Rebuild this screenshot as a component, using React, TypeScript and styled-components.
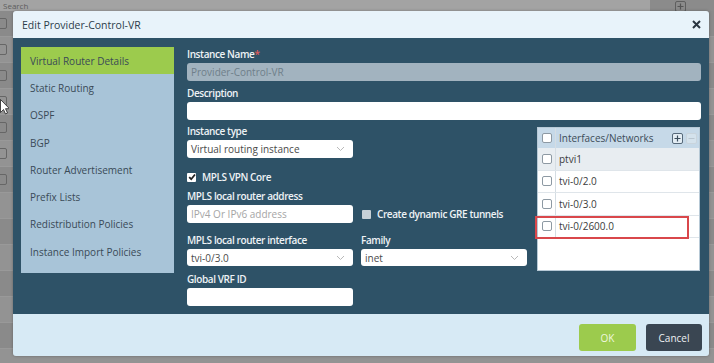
import React from 'react';
import styled, { createGlobalStyle } from 'styled-components';

const GlobalStyle = createGlobalStyle`
  html, body { margin: 0; padding: 0; }
  body {
    font-family: 'Open Sans', 'Liberation Sans', sans-serif;
    background: #8b8b8b;
  }
`;

const Page = styled.div`
  position: relative;
  width: 714px;
  height: 363px;
  overflow: hidden;
  background: #8b8b8b;
`;

const TopBar = styled.div`
  height: 11px;
  display: flex;
  align-items: flex-start;
  gap: 8px;
`;

const SearchBox = styled.div`
  width: 650px;
  height: 11px;
  box-sizing: border-box;
  padding-left: 3px;
  background: #a3a3a3;
  font-size: 8px;
  line-height: 11px;
  color: #5d5d5d;
`;

const TinyBtn = styled.div`
  width: 9px;
  height: 9px;
  margin: 1px 0 0 17px;
  display: flex;
  align-items: center;
  justify-content: center;
  border: 1px solid #5f5f5f;
  border-radius: 2px;
`;

const BgRow = styled.div<{ $shade: boolean }>`
  height: 25px;
  display: flex;
  align-items: center;
  background: ${p => (p.$shade ? '#939393' : '#8a8a8a')};
  border-bottom: 1px solid #999;
`;

const BgCheck = styled.div`
  width: 8px;
  height: 9px;
  margin-left: -3px;
  border: 1px solid #666;
  border-radius: 2px;
`;

const Pointer = styled.svg`
  position: absolute;
  left: 0;
  top: 99px;
`;

const Modal = styled.div`
  position: absolute;
  left: 13px;
  top: 11px;
  width: 696px;
  height: 345px;
  display: flex;
  flex-direction: column;
  border-radius: 3px;
  overflow: hidden;
  box-shadow: 0 0 3px rgba(0, 0, 0, 0.3);
`;

const Header = styled.div`
  height: 27px;
  flex: none;
  display: flex;
  align-items: center;
  justify-content: space-between;
  padding: 0 8px 0 9px;
  background: #e8f3fa;
  font-size: 10.5px;
  color: #2c3d4a;
`;

const Body = styled.div`
  flex: 1;
  display: flex;
  gap: 13px;
  padding: 9px 8px 0 8px;
  background: #2e5267;
`;

const Nav = styled.ul`
  width: 153px;
  height: 226px;
  flex: none;
  margin: 0;
  padding: 0;
  list-style: none;
  background: #a8c4d8;
`;

const NavItem = styled.li<{ $active?: boolean }>`
  height: 27.3px;
  display: flex;
  align-items: center;
  padding-left: 9px;
  font-size: 10px;
  color: #3a4a57;
  background: ${p => (p.$active ? '#9ccb4d' : 'transparent')};
`;

const Form = styled.div`
  flex: 1;
  display: flex;
  flex-direction: column;
`;

const Label = styled.div<{ $top?: number }>`
  height: 15px;
  margin-top: ${p => p.$top ?? 0}px;
  margin-bottom: 1px;
  font-size: 10px;
  font-weight: 600;
  letter-spacing: -0.4px;
  line-height: 15px;
  color: #eef3f6;
  white-space: nowrap;
`;

const Req = styled.span`
  color: #e05a5a;
`;

const Input = styled.div<{ $w?: number; $disabled?: boolean; $h?: number }>`
  width: ${p => (p.$w ? p.$w + 'px' : '100%')};
  height: ${p => p.$h ?? 18}px;
  box-sizing: border-box;
  display: flex;
  align-items: center;
  justify-content: space-between;
  padding: 0 8px 0 4px;
  border-radius: 3px;
  background: ${p => (p.$disabled ? '#a2b3bf' : '#ffffff')};
  font-size: 10px;
  color: ${p => (p.$disabled ? '#6f7f8a' : '#4a4a4a')};
  white-space: nowrap;
`;

const Placeholder = styled.span`
  color: #a5a5a5;
`;

const Lower = styled.div`
  display: flex;
  gap: 10px;
`;

const LeftCol = styled.div`
  width: 340px;
  display: flex;
  flex-direction: column;
`;

const Row = styled.div<{ $gap?: number }>`
  display: flex;
  align-items: center;
  gap: ${p => p.$gap ?? 8}px;
`;

const Col = styled.div`
  display: flex;
  flex-direction: column;
`;

const CheckRow = styled.label<{ $top?: number }>`
  display: flex;
  align-items: center;
  gap: 6px;
  height: 14px;
  margin-top: ${p => p.$top ?? 0}px;
  font-size: 10px;
  font-weight: 600;
  letter-spacing: -0.4px;
  color: #eef3f6;
  white-space: nowrap;
`;

const Box = styled.span<{ $fill: string }>`
  width: 9px;
  height: 9px;
  flex: none;
  display: flex;
  align-items: center;
  justify-content: center;
  border-radius: 1px;
  background: ${p => p.$fill};
`;

const Grid = styled.div`
  width: 163px;
  height: 144px;
  margin-top: 7px;
  display: flex;
  flex-direction: column;
  background: #ffffff;
  border: 1px solid #b7c9d6;
  box-sizing: border-box;
`;

const GridHead = styled.div`
  height: 20px;
  flex: none;
  display: flex;
  align-items: center;
  background: #c6d9e8;
  font-size: 10px;
  color: #3d4c58;
`;

const GridRow = styled.div<{ $tint?: boolean; $marked?: boolean }>`
  position: relative;
  height: 22.5px;
  flex: none;
  display: flex;
  align-items: center;
  border-bottom: 1px solid #dfe5ea;
  box-sizing: border-box;
  background: ${p => (p.$tint ? '#e8edf1' : '#ffffff')};
  font-size: 10px;
  color: #3b3b3b;

  ${p =>
    p.$marked &&
    `&::after {
      content: '';
      position: absolute;
      left: -3px;
      top: 0;
      width: 154px;
      height: 23px;
      box-sizing: border-box;
      border: 2px solid #d9474b;
    }`}
`;

const CheckCell = styled.div`
  width: 17px;
  height: 100%;
  flex: none;
  display: flex;
  align-items: center;
  justify-content: center;
  border-right: 1px solid #d5dde3;
  margin-right: 3px;
`;

const GridBox = styled.span`
  width: 8px;
  height: 8px;
  border: 1px solid #8d99a3;
  border-radius: 2px;
  background: #fff;
`;

const HeadTools = styled.div`
  margin-left: auto;
  display: flex;
  gap: 3px;
  padding-right: 2px;
`;

const ToolBtn = styled.span<{ $dim?: boolean }>`
  width: 9px;
  height: 9px;
  display: flex;
  align-items: center;
  justify-content: center;
  border: 1px solid ${p => (p.$dim ? '#c9d4dc' : '#56697a')};
  border-radius: 2px;
  background: ${p => (p.$dim ? '#d4e2ec' : '#e3edf4')};
`;

const Footer = styled.div`
  height: 42px;
  flex: none;
  display: flex;
  justify-content: flex-end;
  align-items: flex-start;
  gap: 10px;
  padding: 10px 7px 0 0;
  box-sizing: border-box;
  background: #d7eaf5;
`;

const Button = styled.button<{ $primary?: boolean }>`
  width: ${p => (p.$primary ? 57 : 56)}px;
  height: 27px;
  border: none;
  border-radius: 3px;
  font-family: inherit;
  font-size: 10px;
  color: ${p => (p.$primary ? '#eef7df' : '#eef1f3')};
  background: ${p => (p.$primary ? '#9ccb4d' : '#3a4652')};
`;

const Chevron = () => (
  <svg width="9" height="6" viewBox="0 0 9 6">
    <path d="M1 1l3.5 3.5L8 1" fill="none" stroke="#b9b9b9" strokeWidth="1" />
  </svg>
);

const Tick = () => (
  <svg width="8" height="8" viewBox="0 0 8 8">
    <path d="M1.2 4.2l2 2L7 1.5" fill="none" stroke="#222" strokeWidth="1.8" />
  </svg>
);

const Plus = ({ color }: { color: string }) => (
  <svg width="7" height="7" viewBox="0 0 7 7">
    <path d="M3.5 0.5v6M0.5 3.5h6" stroke={color} strokeWidth="1.2" />
  </svg>
);

const Minus = ({ color }: { color: string }) => (
  <svg width="7" height="7" viewBox="0 0 7 7">
    <path d="M0.5 3.5h6" stroke={color} strokeWidth="1.2" />
  </svg>
);

const navItems = [
  'Virtual Router Details',
  'Static Routing',
  'OSPF',
  'BGP',
  'Router Advertisement',
  'Prefix Lists',
  'Redistribution Policies',
  'Instance Import Policies',
];

const interfaces = ['ptvi1', 'tvi-0/2.0', 'tvi-0/3.0', 'tvi-0/2600.0'];

export default function App() {
  return (
    <Page>
      <GlobalStyle />
      <TopBar>
        <SearchBox>Search</SearchBox>
        <TinyBtn>
          <Plus color="#555" />
        </TinyBtn>
      </TopBar>
      {Array.from({ length: 14 }).map((_, i) => (
        <BgRow key={i} $shade={i % 2 === 1}>
          {i < 7 && <BgCheck />}
        </BgRow>
      ))}
      <Pointer width="9" height="16" viewBox="0 0 9 16">
        <path d="M0.5 0.5v13l3-3 2 4.5 2-1-2-4.3h4z" fill="#fff" stroke="#222" strokeWidth="0.8" />
      </Pointer>

      <Modal>
        <Header>
          <span>Edit Provider-Control-VR</span>
          <svg width="9" height="9" viewBox="0 0 9 9">
            <path d="M1 1l7 7M8 1l-7 7" stroke="#2a3540" strokeWidth="2" />
          </svg>
        </Header>

        <Body>
          <Nav>
            {navItems.map((n, i) => (
              <NavItem key={n} $active={i === 0}>
                {n}
              </NavItem>
            ))}
          </Nav>

          <Form>
            <Label>
              Instance Name<Req>*</Req>
            </Label>
            <Input $disabled>Provider-Control-VR</Input>
            <Label $top={5}>Description</Label>
            <Input />

            <Lower>
              <LeftCol>
                <Label $top={4}>Instance type</Label>
                <Input $w={166}>
                  Virtual routing instance <Chevron />
                </Input>
                <CheckRow $top={12}>
                  <Box $fill="#ffffff">
                    <Tick />
                  </Box>
                  MPLS VPN Core
                </CheckRow>
                <Label $top={5}>MPLS local router address</Label>
                <Row $gap={9}>
                  <Input $w={166}>
                    <Placeholder>IPv4 Or IPv6 address</Placeholder>
                  </Input>
                  <CheckRow>
                    <Box $fill="#c7d0d6" />
                    Create dynamic GRE tunnels
                  </CheckRow>
                </Row>
                <Row>
                  <Col>
                    <Label $top={10}>MPLS local router interface</Label>
                    <Input $w={166} $h={17}>
                      tvi-0/3.0 <Chevron />
                    </Input>
                  </Col>
                  <Col>
                    <Label $top={10}>Family</Label>
                    <Input $w={166} $h={17}>
                      inet <Chevron />
                    </Input>
                  </Col>
                </Row>
                <Label $top={6}>Global VRF ID</Label>
                <Input $w={166} />
              </LeftCol>

              <Grid>
                <GridHead>
                  <CheckCell>
                    <GridBox />
                  </CheckCell>
                  Interfaces/Networks
                  <HeadTools>
                    <ToolBtn>
                      <Plus color="#3b4d5c" />
                    </ToolBtn>
                    <ToolBtn $dim>
                      <Minus color="#b9c6d0" />
                    </ToolBtn>
                  </HeadTools>
                </GridHead>
                {interfaces.map((name, i) => (
                  <GridRow key={name} $tint={i === 0} $marked={i === 3}>
                    <CheckCell>
                      <GridBox />
                    </CheckCell>
                    {name}
                  </GridRow>
                ))}
              </Grid>
            </Lower>
          </Form>
        </Body>

        <Footer>
          <Button $primary>OK</Button>
          <Button>Cancel</Button>
        </Footer>
      </Modal>
    </Page>
  );
}
